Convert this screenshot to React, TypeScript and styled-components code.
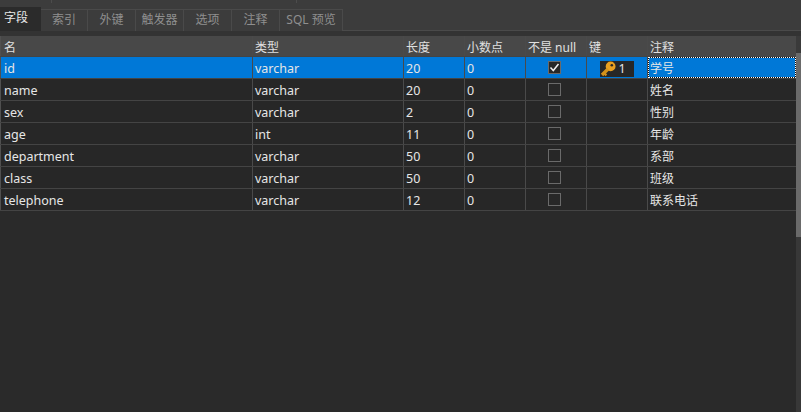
import React from "react";
import styled, { createGlobalStyle } from "styled-components";

const Global = createGlobalStyle`
  html, body { margin: 0; padding: 0; background: #2a2a2a; overflow: hidden; }
  #root { width: 801px; height: 412px; }
`;
const FONT = `"Noto Sans", "Noto Sans CJK SC", sans-serif`;

const Page = styled.div`
  width: 801px; height: 412px; display: flex; flex-direction: column;
  background: #2a2a2a; font-family: ${FONT}; font-size: 12.5px; overflow: hidden;
`;
const TopStrip = styled.div`
  height: 3px; flex: none; display: flex; background: #3c3c3c;
`;
const TopCell = styled.div<{ $w: number }>`
  width: ${p => p.$w}px; flex: none; box-sizing: border-box; border-right: 1px solid #4c4c4c;
`;
const TabBar = styled.div`
  height: 28px; flex: none; display: flex; align-items: flex-start; background: #3c3c3c;
  box-sizing: border-box; padding-top: 5px; border-bottom: 1px solid #4a4a4a;
`;
const Tab = styled.div<{ $w: number; $active?: boolean }>`
  width: ${p => p.$w}px; flex: none; box-sizing: border-box;
  text-align: ${p => (p.$active ? "left" : "center")};
  padding-left: ${p => (p.$active ? 4 : 0)}px;
  height: ${p => (p.$active ? 24 : 22)}px; line-height: ${p => (p.$active ? 20 : 19)}px;
  margin-top: ${p => (p.$active ? -1 : 1)}px;
  background: ${p => (p.$active ? "#2b2b2b" : "#3c3c3c")};
  color: ${p => (p.$active ? "#e8e8e8" : "#8f8f8f")};
  border: 1px solid ${p => (p.$active ? "#2b2b2b" : "#4a4a4a")};
  border-left: none; border-bottom: none; font-size: 12px; white-space: nowrap;
  position: relative; z-index: ${p => (p.$active ? 1 : 0)};
`;
const Gap = styled.div`
  height: 5px; flex: none; background: #333333;
`;
const Body = styled.div`
  flex: 1; display: flex; min-height: 0;
`;
const Grid = styled.div`
  flex: 1; min-width: 0; display: flex; flex-direction: column;
`;
const Row = styled.div<{ $h?: boolean; $sel?: boolean }>`
  display: flex; flex: none; height: ${p => (p.$h ? 21 : 22)}px; box-sizing: border-box;
  padding-left: 2px;
  border-bottom: 1px solid #444444;
  background: ${p => (p.$h ? "#484848" : p.$sel ? "#0078d7" : "#272727")};
  color: ${p => (p.$h ? "#e0e0e0" : "#e6e6e6")};
  box-shadow: inset 1px 0 0 #505050;
`;
const Cell = styled.div<{ $w: number; $center?: boolean; $focus?: boolean; $h?: boolean; $pad?: number }>`
  flex: ${p => (p.$w ? `0 0 ${p.$w}px` : "1 1 0")};
  box-sizing: border-box; padding-left: ${p => p.$pad ?? 2}px; min-width: 0;
  padding-top: 3px;
  border-right: ${p => (p.$w ? "1px solid #4a4a4a" : "none")};
  line-height: 18px; white-space: nowrap; overflow: hidden;
  display: flex; align-items: center;
  justify-content: ${p => (p.$center ? "center" : "flex-start")};
  font-size: ${p => (p.$h ? 12 : 12.5)}px;
  outline: ${p => (p.$focus ? "1px dotted #ffffff" : "none")};
  outline-offset: -1px;
  box-shadow: ${p => (p.$focus ? "inset 0 0 0 1px #101010" : "none")};
`;
const Note = styled.span`
  font-size: 12px;
`;
const Check = styled.span<{ $on?: boolean }>`
  width: 13px; height: 13px; box-sizing: border-box; display: flex;
  align-items: center; justify-content: center;
  border: 1px solid #6a6a6a; margin: -3px 6px 0 0; background: ${p => (p.$on ? "#272727" : "transparent")};
`;
const KeyBadge = styled.span`
  width: 34px; height: 16px; display: flex; align-items: center; gap: 3px;
  background: #272727; color: #e6e6e6; font-size: 12.5px; box-sizing: border-box; margin-right: 3px;
  margin-top: -1px;
`;
const Scrollbar = styled.div`
  width: 5px; flex: none; background: #383838; display: flex; flex-direction: column;
`;
const Track = styled.div`
  height: 17px; flex: none; background: #3a3a3a;
`;
const Thumb = styled.div`
  height: 184px; flex: none; background: #6a6a6a;
`;

const columns = [251, 151, 61, 61, 61, 61, 0];
const heads = ["名", "类型", "长度", "小数点", "不是 null", "键", "注释"];
const tabs: [string, number][] = [["字段", 41], ["索引", 47], ["外键", 48], ["触发器", 48], ["选项", 48], ["注释", 48], ["SQL 预览", 63]];
const rows = [
  ["id", "varchar", "20", "0", "学号"],
  ["name", "varchar", "20", "0", "姓名"],
  ["sex", "varchar", "2", "0", "性别"],
  ["age", "int", "11", "0", "年龄"],
  ["department", "varchar", "50", "0", "系部"],
  ["class", "varchar", "50", "0", "班级"],
  ["telephone", "varchar", "12", "0", "联系电话"],
];

const KeyIcon = () => (
  <svg width="16" height="16" viewBox="0 0 16 16">
    <circle cx="10.6" cy="5.4" r="4.9" fill="#e8a020" />
    <circle cx="11.8" cy="4.2" r="1.3" fill="#272727" />
    <path d="M8 8 L2 14" stroke="#d4921c" strokeWidth="3.4" fill="none" />
    <path d="M4 12 L6.4 14.4" stroke="#d4921c" strokeWidth="2.2" fill="none" />
  </svg>
);

export default function App() {
  return (
    <Page>
      <Global />
      <TopStrip>
        <TopCell $w={52} />
        <TopCell $w={245} />
      </TopStrip>
      <TabBar>
        {tabs.map(([t, w], i) => (
          <Tab key={t} $w={w} $active={i === 0}>{t}</Tab>
        ))}
      </TabBar>
      <Gap />
      <Body>
        <Grid>
          <Row $h>
            {heads.map((h, i) => (
              <Cell key={h} $w={columns[i]} $h>{h}</Cell>
            ))}
          </Row>
          {rows.map((r, i) => (
            <Row key={r[0]} $sel={i === 0}>
              <Cell $w={columns[0]}>{r[0]}</Cell>
              <Cell $w={columns[1]}>{r[1]}</Cell>
              <Cell $w={columns[2]}>{r[2]}</Cell>
              <Cell $w={columns[3]}>{r[3]}</Cell>
              <Cell $w={columns[4]} $center>
                <Check $on={i === 0}>
                  {i === 0 && (
                    <svg width="11" height="11" viewBox="0 0 11 11">
                      <path d="M1.5 5.5 L4.3 8.5 L9.5 2" stroke="#f0f0f0" strokeWidth="1.5" fill="none" />
                    </svg>
                  )}
                </Check>
              </Cell>
              <Cell $w={columns[5]} $center>
                {i === 0 && (
                  <KeyBadge><KeyIcon />1</KeyBadge>
                )}
              </Cell>
              <Cell $w={0} $focus={i === 0}><Note>{r[4]}</Note></Cell>
            </Row>
          ))}
        </Grid>
        <Scrollbar>
          <Track />
          <Thumb />
        </Scrollbar>
      </Body>
    </Page>
  );
}
